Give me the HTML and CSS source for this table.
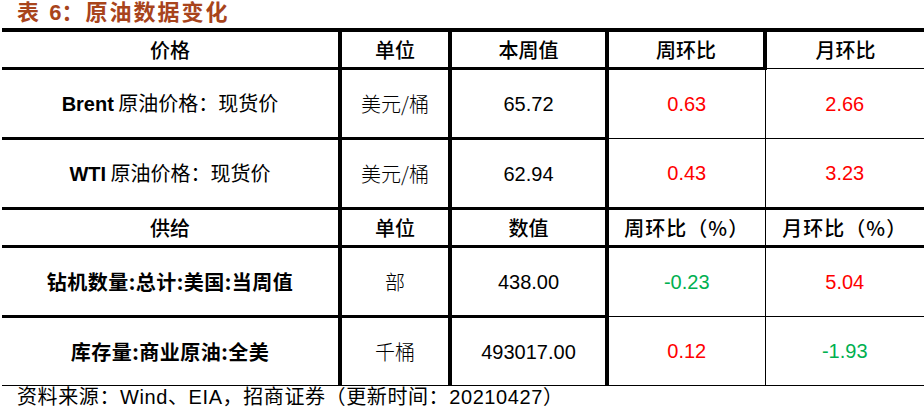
FILE: index.html
```html
<!DOCTYPE html>
<html lang="zh-CN">
<head>
<meta charset="utf-8">
<title>表 6：原油数据变化</title>
<link rel="stylesheet" href="styles.css">
</head>
<body>
<div class="title">表 <span class="num">6</span>：原油数据变化</div>
<table class="data">
  <colgroup>
    <col class="w1"><col class="w2"><col class="w3"><col class="w4"><col class="w5">
  </colgroup>
  <tr class="head head-top">
    <td>价格</td><td>单位</td><td>本周值</td><td>周环比</td><td>月环比</td>
  </tr>
  <tr class="row">
    <td class="label"><b>Brent</b> 原油价格：现货价</td><td class="unit">美元/桶</td><td>65.72</td><td class="up">0.63</td><td class="up">2.66</td>
  </tr>
  <tr class="row">
    <td class="label"><b>WTI</b> 原油价格：现货价</td><td class="unit">美元/桶</td><td>62.94</td><td class="up">0.43</td><td class="up">3.23</td>
  </tr>
  <tr class="head head-mid">
    <td>供给</td><td>单位</td><td>数值</td><td>周环比（%）</td><td>月环比（%）</td>
  </tr>
  <tr class="row">
    <td class="label strong">钻机数量:总计:美国:当周值</td><td class="unit">部</td><td>438.00</td><td class="down">-0.23</td><td class="up">5.04</td>
  </tr>
  <tr class="row last">
    <td class="label strong">库存量:商业原油:全美</td><td class="unit">千桶</td><td>493017.00</td><td class="up">0.12</td><td class="down">-1.93</td>
  </tr>
</table>
<div class="source">资料来源：Wind、EIA，招商证券（更新时间：20210427）</div>
</body>
</html>
```

FILE: styles.css
```css
html, body {
  margin: 0;
  padding: 0;
  background: #fff;
}

body {
  font-family: "Liberation Sans", "Noto Sans CJK SC", sans-serif;
  color: #000;
  width: 924px;
  height: 410px;
  overflow: hidden;
}

.title {
  height: 28px;
  padding-left: 17px;
  font-size: 22px;
  line-height: 25px;
  font-weight: 700;
  letter-spacing: 2px;
  color: #a8441c;
}

.title .num {
  font-family: "Liberation Sans", sans-serif;
  letter-spacing: 0;
}

.data {
  margin-left: 2px;
  width: 922px;
  table-layout: fixed;
  border-collapse: collapse;
  font-size: 20px;
}

.w1 { width: 338px; }
.w2 { width: 110px; }
.w3 { width: 157px; }
.w4 { width: 158px; }
.w5 { width: 159px; }

.data td {
  padding: 0;
  text-align: center;
  vertical-align: middle;
  white-space: nowrap;
  line-height: 24px;
}

/* vertical rules */
.data td:nth-child(-n+3) {
  border-right: 4px solid #000;
}
.data td:nth-child(4) {
  border-right: 1px solid #000;
}
.head-top td:nth-child(4) {
  border-right: 4px solid #000;
}

/* header rows */
.head td {
  font-family: "Noto Sans CJK SC", sans-serif;
  font-weight: 500;
  height: 35px;
}
.head-top td {
  border-top: 4px solid #000;
  border-bottom: 3px solid #000;
}
.head-top td:nth-child(5) {
  border-bottom: 1px solid #000;
}
.head-mid td {
  border-top: 3px solid #000;
  border-bottom: 3px solid #000;
}
.head-mid td:nth-child(n+4) {
  letter-spacing: 1px;
}

/* data rows */
.row td {
  height: 67px;
  border-bottom: 1px solid #000;
}
.row td:nth-child(-n+3) {
  border-bottom: 3px solid #000;
}
.row.last td {
  border-bottom: 1px solid #000;
}

.label {
  font-family: "Noto Sans CJK SC", sans-serif;
}
.label b {
  font-family: "Liberation Sans", sans-serif;
  font-weight: 700;
}
.label.strong {
  font-weight: 700;
  letter-spacing: 0.5px;
}

.unit {
  font-family: "Noto Sans CJK SC", sans-serif;
  font-weight: 300;
}

.up { color: #ff0000; }
.down { color: #00b050; }

.source {
  padding-left: 17px;
  font-size: 20px;
  line-height: 23px;
  letter-spacing: 0.6px;
}
```
